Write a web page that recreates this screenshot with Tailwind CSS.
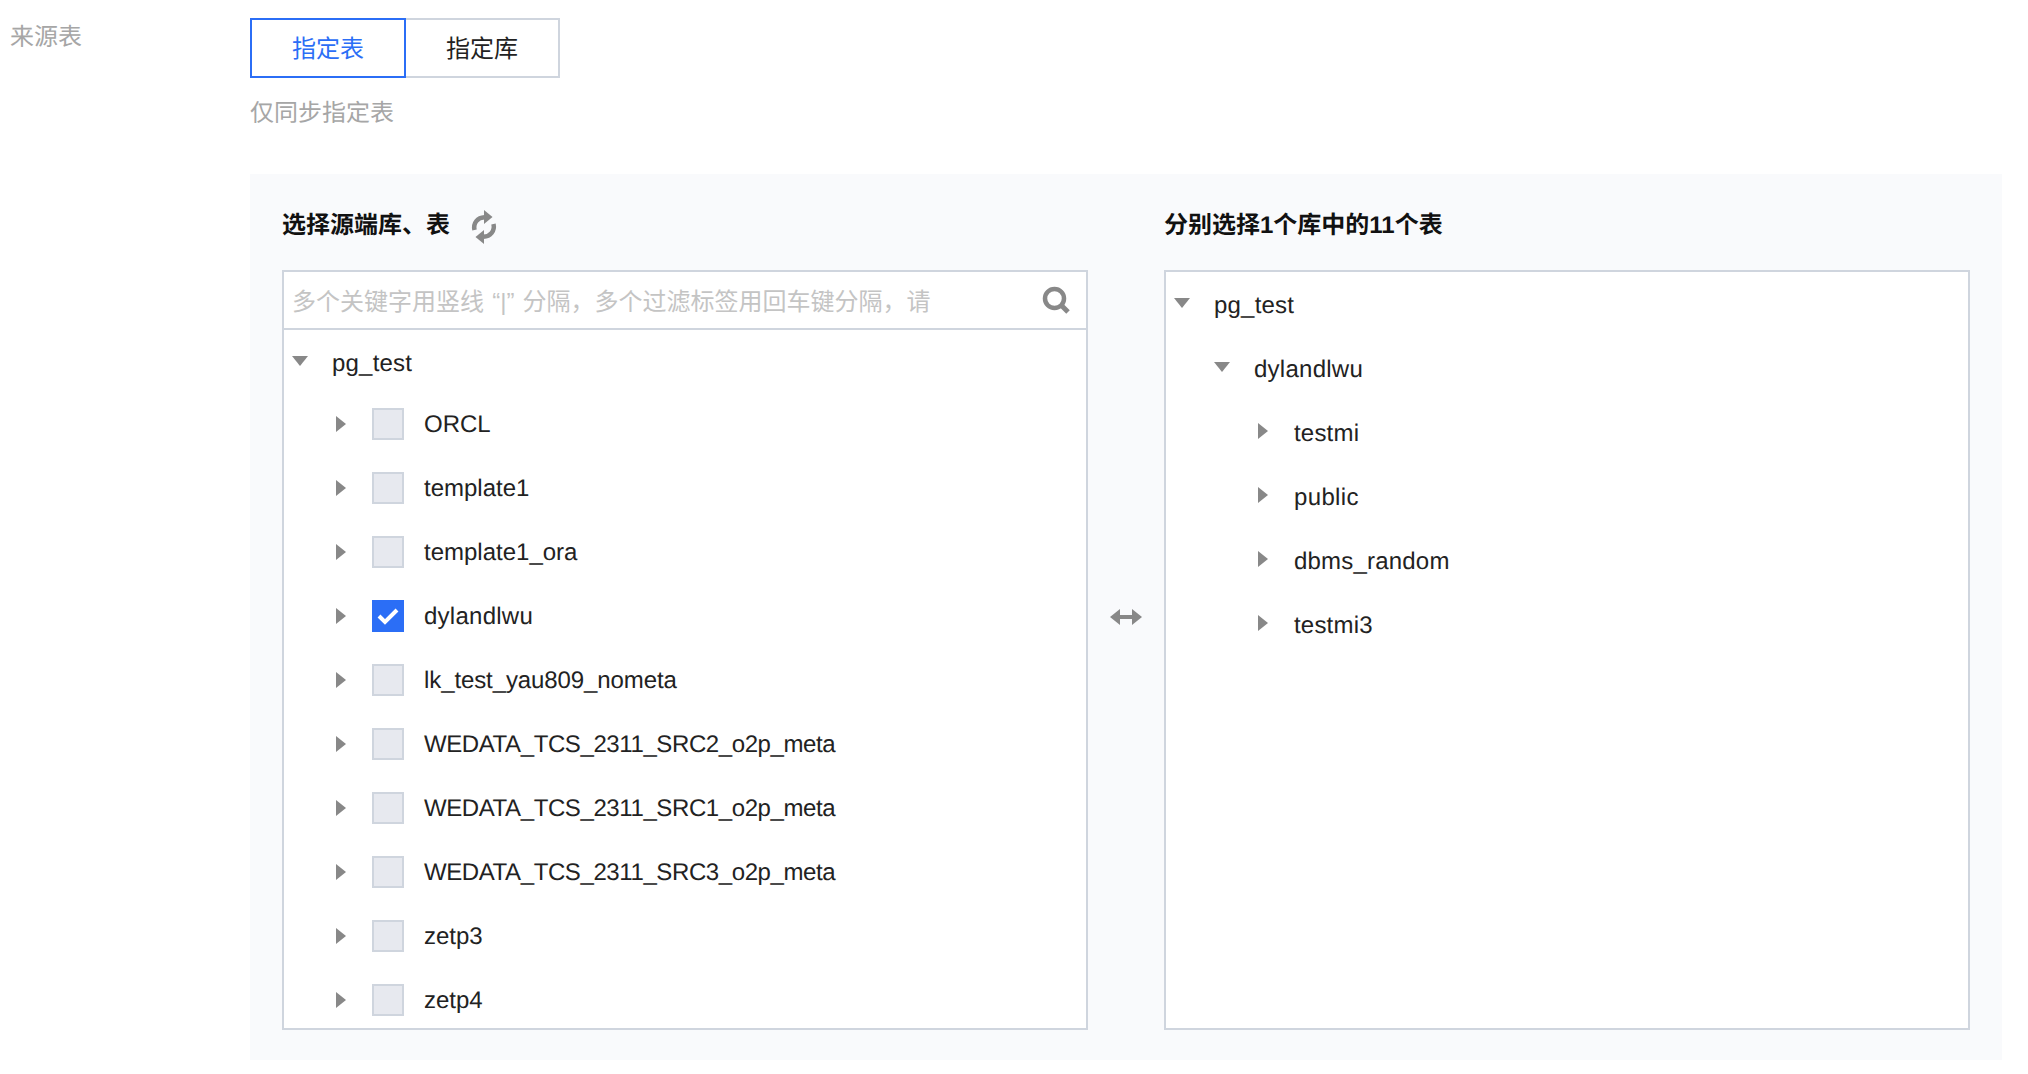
<!DOCTYPE html>
<html lang="zh-CN">
<head>
    <meta charset="UTF-8">
    <title>来源表</title>
    <script src="https://cdn.jsdelivr.net/npm/@tailwindcss/browser@4"></script>
</head>
<body class="bg-white h-[1074px] overflow-hidden text-[24px] text-[#222] [text-rendering:geometricPrecision] font-['Liberation_Sans','Noto_Sans_CJK_SC',sans-serif]">
    <div class="flex pt-[18px]">
        <!-- 左侧标签 -->
        <div class="w-[250px] pl-[10px] pt-[2px] h-[36px] leading-[36px] text-[#a6a6a6]">来源表</div>

        <div class="w-[1752px]">
            <!-- 切换按钮 -->
            <div class="flex h-[60px]">
                <button class="w-[156px] h-full pt-[2px] border-2 border-[#2b6ef6] text-[#2b6ef6]">指定表</button>
                <button class="w-[154px] h-full pt-[2px] border-2 border-l-0 border-[#cfd5de] text-[#222]">指定库</button>
            </div>
            <div class="mt-[18px] h-[36px] leading-[36px] text-[#a6a6a6]">仅同步指定表</div>

            <!-- 穿梭框 -->
            <div class="mt-[42px] h-[886px] bg-[#f9fafc] px-[32px] pt-[32px] flex">
                <!-- 左栏 -->
                <div class="w-[806px]">
                    <div class="h-[36px] pt-[4px] mb-[28px] flex items-center font-bold text-[#111]">
                        <span>选择源端库、表</span>
                        <svg class="ml-[20px] mt-[2px]" width="28" height="34" viewBox="0 0 28 34" fill="#888">
                            <path d="M4.500 20c-1.500-7 3-12.500 10-12.800" fill="none" stroke="#888" stroke-width="4.500"/>
                            <path d="M14 0l8.500 7L14 14z"/>
                            <path d="M23.500 14c1.500 7-3 12.500-10 12.800" fill="none" stroke="#888" stroke-width="4.500"/>
                            <path d="M14 34l-8.500-7L14 20z"/>
                        </svg>
                    </div>
                    <div class="h-[760px] bg-white border-2 border-[#cfd5de] overflow-hidden">
                        <div class="h-[58px] border-b-2 border-[#cfd5de] flex items-center pl-[8px] pr-[16px]">
                            <input class="flex-1 min-w-0 pt-[4px] outline-none text-[24px] [word-spacing:1.5px] placeholder:text-[#c4c4c4]" placeholder="多个关键字用竖线 “|” 分隔，多个过滤标签用回车键分隔，请">
                            <svg width="28" height="28" viewBox="0 0 28 28" fill="none" stroke="#888">
                                <circle cx="12.500" cy="12.500" r="9.500" stroke-width="4.500"/>
                                <path d="M19.500 19.500l6.500 6.500" stroke-width="5"/>
                            </svg>
                        </div>
                        <div>
                            <div class="h-[62px] pt-[4px] pl-[8px] flex items-center">
                                <svg class="mb-[4px] mr-[24px]" width="16" height="10" viewBox="0 0 16 10" fill="#888"><path d="M0 0h16L8 10z"/></svg>
                                <span class="pt-[2px] tracking-[0.2px]">pg_test</span>
                            </div>
                            <div class="h-[64px] pl-[52px] flex items-center">
                                <svg class="mr-[26px]" width="10" height="16" viewBox="0 0 10 16" fill="#888"><path d="M0 0l10 8-10 8z"/></svg>
                                <span class="w-[32px] h-[32px] mr-[20px] bg-[#e7e9ef] border-2 border-[#cfd5de]"></span>
                                <span class="pt-[2px]">ORCL</span>
                            </div>
                            <div class="h-[64px] pl-[52px] flex items-center">
                                <svg class="mr-[26px]" width="10" height="16" viewBox="0 0 10 16" fill="#888"><path d="M0 0l10 8-10 8z"/></svg>
                                <span class="w-[32px] h-[32px] mr-[20px] bg-[#e7e9ef] border-2 border-[#cfd5de]"></span>
                                <span class="pt-[2px]">template1</span>
                            </div>
                            <div class="h-[64px] pl-[52px] flex items-center">
                                <svg class="mr-[26px]" width="10" height="16" viewBox="0 0 10 16" fill="#888"><path d="M0 0l10 8-10 8z"/></svg>
                                <span class="w-[32px] h-[32px] mr-[20px] bg-[#e7e9ef] border-2 border-[#cfd5de]"></span>
                                <span class="pt-[2px]">template1_ora</span>
                            </div>
                            <div class="h-[64px] pl-[52px] flex items-center">
                                <svg class="mr-[26px]" width="10" height="16" viewBox="0 0 10 16" fill="#888"><path d="M0 0l10 8-10 8z"/></svg>
                                <span class="w-[32px] h-[32px] mr-[20px] bg-[#2b6ef6] flex items-center justify-center">
                                    <svg width="24" height="18" viewBox="0 0 24 18" fill="none" stroke="#fff" stroke-width="4"><path d="M3 9l6 6L21 3"/></svg>
                                </span>
                                <span class="pt-[2px] tracking-[0.25px]">dylandlwu</span>
                            </div>
                            <div class="h-[64px] pl-[52px] flex items-center">
                                <svg class="mr-[26px]" width="10" height="16" viewBox="0 0 10 16" fill="#888"><path d="M0 0l10 8-10 8z"/></svg>
                                <span class="w-[32px] h-[32px] mr-[20px] bg-[#e7e9ef] border-2 border-[#cfd5de]"></span>
                                <span class="pt-[2px] tracking-[-0.1px]">lk_test_yau809_nometa</span>
                            </div>
                            <div class="h-[64px] pl-[52px] flex items-center">
                                <svg class="mr-[26px]" width="10" height="16" viewBox="0 0 10 16" fill="#888"><path d="M0 0l10 8-10 8z"/></svg>
                                <span class="w-[32px] h-[32px] mr-[20px] bg-[#e7e9ef] border-2 border-[#cfd5de]"></span>
                                <span class="pt-[2px] tracking-[-0.4px]">WEDATA_TCS_2311_SRC2_o2p_meta</span>
                            </div>
                            <div class="h-[64px] pl-[52px] flex items-center">
                                <svg class="mr-[26px]" width="10" height="16" viewBox="0 0 10 16" fill="#888"><path d="M0 0l10 8-10 8z"/></svg>
                                <span class="w-[32px] h-[32px] mr-[20px] bg-[#e7e9ef] border-2 border-[#cfd5de]"></span>
                                <span class="pt-[2px] tracking-[-0.4px]">WEDATA_TCS_2311_SRC1_o2p_meta</span>
                            </div>
                            <div class="h-[64px] pl-[52px] flex items-center">
                                <svg class="mr-[26px]" width="10" height="16" viewBox="0 0 10 16" fill="#888"><path d="M0 0l10 8-10 8z"/></svg>
                                <span class="w-[32px] h-[32px] mr-[20px] bg-[#e7e9ef] border-2 border-[#cfd5de]"></span>
                                <span class="pt-[2px] tracking-[-0.4px]">WEDATA_TCS_2311_SRC3_o2p_meta</span>
                            </div>
                            <div class="h-[64px] pl-[52px] flex items-center">
                                <svg class="mr-[26px]" width="10" height="16" viewBox="0 0 10 16" fill="#888"><path d="M0 0l10 8-10 8z"/></svg>
                                <span class="w-[32px] h-[32px] mr-[20px] bg-[#e7e9ef] border-2 border-[#cfd5de]"></span>
                                <span class="pt-[2px]">zetp3</span>
                            </div>
                            <div class="h-[64px] pl-[52px] flex items-center">
                                <svg class="mr-[26px]" width="10" height="16" viewBox="0 0 10 16" fill="#888"><path d="M0 0l10 8-10 8z"/></svg>
                                <span class="w-[32px] h-[32px] mr-[20px] bg-[#e7e9ef] border-2 border-[#cfd5de]"></span>
                                <span class="pt-[2px]">zetp4</span>
                            </div>
                        </div>
                    </div>
                </div>

                <!-- 中间箭头 -->
                <div class="w-[76px] pt-[402px] flex items-start justify-center">
                    <svg width="32" height="18" viewBox="0 0 32 18" fill="#888"><path d="M0 9l10-8v6h12V1l10 8-10 8v-6H10v6z"/></svg>
                </div>

                <!-- 右栏 -->
                <div class="w-[806px]">
                    <div class="h-[36px] pt-[4px] mb-[28px] flex items-center font-bold text-[#111]">分别选择1个库中的11个表</div>
                    <div class="h-[760px] bg-white border-2 border-[#cfd5de] pt-[1px]">
                        <div class="h-[64px] pl-[8px] flex items-center">
                            <svg class="mb-[4px] mr-[24px]" width="16" height="10" viewBox="0 0 16 10" fill="#888"><path d="M0 0h16L8 10z"/></svg>
                            <span class="pt-[2px] tracking-[0.2px]">pg_test</span>
                        </div>
                        <div class="h-[64px] pl-[48px] flex items-center">
                            <svg class="mb-[4px] mr-[24px]" width="16" height="10" viewBox="0 0 16 10" fill="#888"><path d="M0 0h16L8 10z"/></svg>
                            <span class="pt-[2px] tracking-[0.25px]">dylandlwu</span>
                        </div>
                        <div class="h-[64px] pl-[92px] flex items-center">
                            <svg class="mb-[5px] mr-[26px]" width="10" height="16" viewBox="0 0 10 16" fill="#888"><path d="M0 0l10 8-10 8z"/></svg>
                            <span class="pt-[2px] tracking-[0.2px]">testmi</span>
                        </div>
                        <div class="h-[64px] pl-[92px] flex items-center">
                            <svg class="mb-[5px] mr-[26px]" width="10" height="16" viewBox="0 0 10 16" fill="#888"><path d="M0 0l10 8-10 8z"/></svg>
                            <span class="pt-[2px] tracking-[0.35px]">public</span>
                        </div>
                        <div class="h-[64px] pl-[92px] flex items-center">
                            <svg class="mb-[5px] mr-[26px]" width="10" height="16" viewBox="0 0 10 16" fill="#888"><path d="M0 0l10 8-10 8z"/></svg>
                            <span class="pt-[2px] tracking-[0.2px]">dbms_random</span>
                        </div>
                        <div class="h-[64px] pl-[92px] flex items-center">
                            <svg class="mb-[5px] mr-[26px]" width="10" height="16" viewBox="0 0 10 16" fill="#888"><path d="M0 0l10 8-10 8z"/></svg>
                            <span class="pt-[2px] tracking-[0.2px]">testmi3</span>
                        </div>
                    </div>
                </div>
            </div>
        </div>
    </div>
</body>
</html>
